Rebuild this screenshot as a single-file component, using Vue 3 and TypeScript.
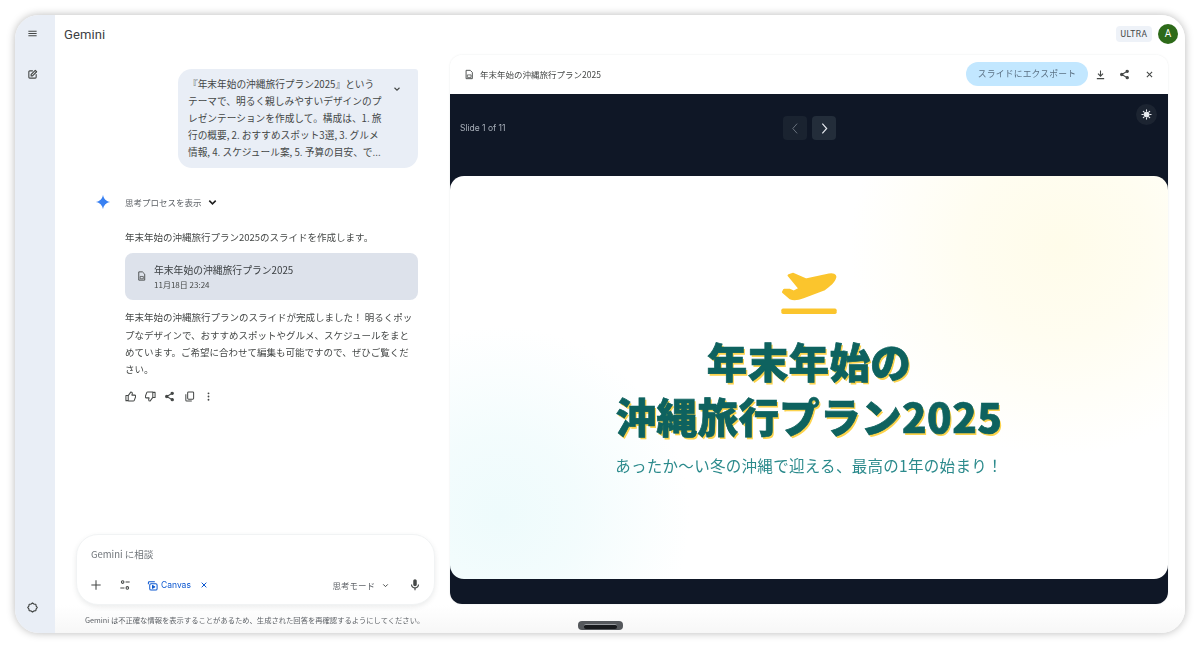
<script setup lang="ts">
const bang = '\uFF01'
const promptLines: string[] = [
  '『年末年始の沖縄旅行プラン2025』という',
  'テーマで、明るく親しみやすいデザインのプ',
  'レゼンテーションを作成して。構成は、1. 旅',
  '行の概要, 2. おすすめスポット3選, 3. グルメ',
  '情報, 4. スケジュール案, 5. 予算の目安、で...',
]
const replyLines: string[] = [
  `年末年始の沖縄旅行プランのスライドが完成しました${bang} 明るくポッ`,
  'プなデザインで、おすすめスポットやグルメ、スケジュールをまと',
  'めています。ご希望に合わせて編集も可能ですので、ぜひご覧くだ',
  'さい。',
]
const subtitle = `あったか〜い冬の沖縄で迎える、最高の1年の始まり${bang}`
</script>

<template>
  <div class="page">
    <div class="window">
      <aside class="rail">
        <div class="rail-top">
          <svg class="ic12" viewBox="0 0 24 24"><path fill="#444746" d="M3 18h18v-2H3v2zm0-5h18v-2H3v2zm0-7v2h18V6H3z" /></svg>
          <svg class="ic12 rail-new" viewBox="0 0 24 24" fill="none" stroke="#444746" stroke-width="2.4" stroke-linecap="round" stroke-linejoin="round">
            <path d="M12 4H6a2 2 0 0 0-2 2v12a2 2 0 0 0 2 2h12a2 2 0 0 0 2-2v-6" />
            <path d="M9 15v-3l9-9 3 3-9 9z" />
          </svg>
        </div>
        <svg class="ic12" viewBox="0 0 24 24" fill="none" stroke="#444746" stroke-width="2.6" stroke-linejoin="round">
          <path d="M12 2l3.200 2.500 4 .4.800 4L22.500 12 20 15.100l-.8 4-4 .4L12 22l-3.200-2.500-4-.4-.8-4L1.500 12 4 8.900l.8-4 4-.4z" />
        </svg>
      </aside>

      <div class="main">
        <header class="topbar">
          <span class="brand">Gemini</span>
          <div class="account">
            <span class="chip">ULTRA</span>
            <span class="avatar">A</span>
          </div>
        </header>

        <div class="content">
          <section class="chat">
            <div class="bubble">
              <p class="bubble-text">
                <span v-for="line in promptLines" :key="line" class="line">{{ line }}</span>
              </p>
              <svg class="bubble-chev" viewBox="0 0 24 24" fill="none" stroke="#444746" stroke-width="2.6"><path d="M6 9l6 6 6-6" /></svg>
            </div>

            <div class="answer">
              <div class="thinking">
                <svg class="spark" viewBox="0 0 24 24">
                  <defs>
                    <linearGradient id="sparkFill" x1="0" y1="1" x2="1" y2="0">
                      <stop offset="0" stop-color="#4285f4" />
                      <stop offset="1" stop-color="#2f7bf0" />
                    </linearGradient>
                  </defs>
                  <path fill="url(#sparkFill)" d="M12 1C12.800 7 17 11.200 23 12 17 12.800 12.800 17 12 23 11.200 17 7 12.800 1 12 7 11.200 11.200 7 12 1Z" />
                </svg>
                <span class="thinking-label">思考プロセスを表示</span>
                <svg class="thinking-chev" viewBox="0 0 24 24" fill="none" stroke="#1f1f1f" stroke-width="3.4"><path d="M5 8l7 7 7-7" /></svg>
              </div>

              <div class="answer-body">
                <p class="intro">年末年始の沖縄旅行プラン2025のスライドを作成します。</p>
                <div class="doc-card">
                  <svg class="doc-icon" viewBox="0 0 24 24" fill="none" stroke="#444746" stroke-width="2" stroke-linejoin="round">
                    <path d="M6 3h8l5 5v13H6z" />
                    <path d="M9 13h7v5H9z" stroke-width="1.600" />
                  </svg>
                  <div class="doc-text">
                    <span class="doc-title">年末年始の沖縄旅行プラン2025</span>
                    <span class="doc-date">11月18日 23:24</span>
                  </div>
                </div>
                <p class="reply">
                  <span v-for="line in replyLines" :key="line" class="line">{{ line }}</span>
                </p>
                <div class="actions">
                  <svg class="ic12" viewBox="0 0 24 24" fill="none" stroke="#444746" stroke-width="2.200" stroke-linejoin="round"><path d="M7 10v11H2V10zM7 10l6-8c2 0 3 1 3 3l-1 4h6c1.300 0 2 1 2 2v2l-3 8c-.3.700-1 1-2 1H7" /></svg>
                  <svg class="ic12" viewBox="0 0 24 24" fill="none" stroke="#444746" stroke-width="2.200" stroke-linejoin="round"><path d="M17 14V3h5v11zM17 14l-6 8c-2 0-3-1-3-3l1-4H3c-1.300 0-2-1-2-2v-2l3-8c.3-.7 1-1 2-1h11" /></svg>
                  <svg class="ic12" viewBox="0 0 24 24" fill="none" stroke="#444746" stroke-width="2.200"><circle cx="18" cy="5" r="2.500" fill="#444746" /><circle cx="6" cy="12" r="2.500" fill="#444746" /><circle cx="18" cy="19" r="2.500" fill="#444746" /><path d="M18 5L6 12l12 7" /></svg>
                  <svg class="ic12" viewBox="0 0 24 24" fill="none" stroke="#444746" stroke-width="2.200"><rect x="8" y="2" width="13" height="16" rx="2" /><path d="M4 7v13a2 2 0 0 0 2 2h11" /></svg>
                  <svg class="ic12" viewBox="0 0 24 24" fill="#444746"><circle cx="12" cy="5" r="2" /><circle cx="12" cy="12" r="2" /><circle cx="12" cy="19" r="2" /></svg>
                </div>
              </div>
            </div>

            <div class="composer">
              <div class="composer-input">Gemini に相談</div>
              <div class="composer-tools">
                <svg class="ic14" viewBox="0 0 24 24" fill="none" stroke="#444746" stroke-width="1.800"><path d="M12 4v16M4 12h16" /></svg>
                <svg class="ic14 tune" viewBox="0 0 24 24" fill="none" stroke="#444746" stroke-width="1.800"><circle cx="8" cy="7" r="2.200" /><path d="M13 7h7M4 17h7" /><circle cx="16" cy="17" r="2.200" /></svg>
                <span class="canvas">
                  <svg class="ic12" viewBox="0 0 24 24" fill="none" stroke="#0b57d0" stroke-width="2.200" stroke-linejoin="round"><path d="M3 9V6a2 2 0 0 1 2-2h12" /><rect x="6" y="8" width="16" height="14" rx="3" /><path d="M12 12l5 3-5 3z" fill="#0b57d0" /></svg>
                  <span class="canvas-label">Canvas</span>
                  <svg class="canvas-x" viewBox="0 0 24 24" fill="none" stroke="#0b57d0" stroke-width="3"><path d="M5 5l14 14M19 5L5 19" /></svg>
                </span>
                <span class="mode">思考モード</span>
                <svg class="mode-chev" viewBox="0 0 24 24" fill="none" stroke="#444746" stroke-width="2.600"><path d="M6 9l6 6 6-6" /></svg>
                <svg class="ic14 mic" viewBox="0 0 24 24"><path fill="#444746" d="M12 14c1.660 0 3-1.340 3-3V5c0-1.660-1.340-3-3-3S9 3.340 9 5v6c0 1.660 1.340 3 3 3zm5-3c0 2.760-2.240 5-5 5s-5-2.240-5-5H5c0 3.530 2.610 6.430 6 6.920V21h2v-3.080c3.390-.49 6-3.390 6-6.920h-2z" /></svg>
              </div>
            </div>
            <p class="disclaimer">Gemini は不正確な情報を表示することがあるため、生成された回答を再確認するようにしてください。</p>
          </section>

          <section class="panel">
            <div class="panel-head">
              <svg class="panel-doc" viewBox="0 0 24 24" fill="none" stroke="#444746" stroke-width="2.200" stroke-linejoin="round">
                <path d="M5 2h10l5 5v15H5z" />
                <path d="M8 13h9v6H8z" stroke-width="1.800" />
              </svg>
              <span class="panel-title">年末年始の沖縄旅行プラン2025</span>
              <button class="export" type="button">スライドにエクスポート</button>
              <svg class="ic12 head-dl" viewBox="0 0 24 24" fill="none" stroke="#444746" stroke-width="2.400"><path d="M12 3v12M6.500 10l5.500 5.500 5.500-5.500M4 21h16" /></svg>
              <svg class="ic12 head-share" viewBox="0 0 24 24" fill="none" stroke="#444746" stroke-width="2.200"><circle cx="18" cy="5" r="2.500" fill="#444746" /><circle cx="6" cy="12" r="2.500" fill="#444746" /><circle cx="18" cy="19" r="2.500" fill="#444746" /><path d="M18 5L6 12l12 7" /></svg>
              <svg class="ic12 head-close" viewBox="0 0 24 24" fill="none" stroke="#444746" stroke-width="2.800"><path d="M5 5l14 14M19 5L5 19" /></svg>
            </div>

            <div class="stage">
              <div class="stage-bar">
                <span class="counter">Slide 1 of 11</span>
                <div class="pager">
                  <span class="page-btn page-btn-off">
                    <svg viewBox="0 0 24 24" fill="none" stroke="#6b7480" stroke-width="1.800"><path d="M15 3l-8 9 8 9" /></svg>
                  </span>
                  <span class="page-btn">
                    <svg viewBox="0 0 24 24" fill="none" stroke="#e4e8ee" stroke-width="2.200"><path d="M8 3l8 9-8 9" /></svg>
                  </span>
                </div>
                <span class="theme-btn">
                  <svg viewBox="0 0 24 24" fill="#e8ebf0" stroke="#e8ebf0" stroke-width="2.400" stroke-linecap="round"><circle cx="12" cy="12" r="5" /><path d="M12 2v3M12 19v3M2 12h3M19 12h3M5 5l2 2M17 17l2 2M5 19l2-2M17 7l2-2" /></svg>
                </span>
              </div>

              <div class="slide">
                <svg class="plane" viewBox="540 35 175 135">
                  <path fill="#fbc52d" stroke="#fbc52d" stroke-width="8" stroke-linejoin="round" d="M567 48L580 44 618 61 688 46C700 44 707 47 706 53 702 68 690 78 672 90L610 113C594 119 580 120 571 116L550 98 553 92 568 92 582 98 600 88Z" />
                  <rect x="544" y="148" width="167" height="16" rx="5" fill="#fbc52d" />
                </svg>
                <h1 class="slide-title">年末年始の<br />沖縄旅行プラン2025</h1>
                <p class="slide-sub">{{ subtitle }}</p>
              </div>
            </div>
          </section>
        </div>
      </div>

      <div class="handle"><span class="handle-inner"></span></div>
    </div>
  </div>
</template>

<style>
html, body { margin: 0; background: #fff; }
</style>

<style scoped>
* { box-sizing: border-box; }
.page {
  width: 1200px;
  height: 648px;
  padding: 15px;
  background: #fff;
  overflow: hidden;
  font-family: "Noto Sans CJK JP", "Noto Sans", sans-serif;
  color: #3c4043;
}
.window {
  position: relative;
  width: 1170px;
  height: 618px;
  display: flex;
  border-radius: 24px;
  overflow: hidden;
  background: #fff;
  box-shadow: 0 0 9px rgba(0, 0, 0, .28);
  filter: blur(.35px);
}
.ic14 { width: 14px; height: 14px; flex: none; display: block; }
.ic12 { width: 11px; height: 11px; flex: none; display: block; }
.line { display: block; white-space: nowrap; }
p, h1 { margin: 0; }

.rail {
  width: 40px;
  flex: none;
  background: #e9eef6;
  display: flex;
  flex-direction: column;
  align-items: center;
  justify-content: space-between;
  padding: 13px 6px 20px 0;
}
.rail-top { display: flex; flex-direction: column; gap: 30px; }

.main {
  flex: 1;
  min-width: 0;
  display: flex;
  flex-direction: column;
  background: linear-gradient(#fff 590px, #f7f7f7);
}
.topbar {
  height: 40px;
  flex: none;
  display: flex;
  align-items: center;
  justify-content: space-between;
  padding: 0 7px 2px 9px;
}
.brand { font: 400 13px/1 Roboto, sans-serif; color: #3c4043; letter-spacing: .1px; }
.account { display: flex; align-items: center; gap: 6px; }
.chip {
  width: 36px;
  height: 16px;
  border-radius: 4px;
  background: #eef2f8;
  display: flex;
  align-items: center;
  justify-content: center;
  font: 400 8.500px/1 Roboto, sans-serif;
  letter-spacing: .4px;
  color: #444746;
}
.avatar {
  width: 20px;
  height: 20px;
  border-radius: 50%;
  background: #2d6a19;
  color: #fff;
  display: flex;
  align-items: center;
  justify-content: center;
  font: 400 10px/1 Roboto, sans-serif;
}
.content { flex: 1; min-height: 0; display: flex; padding-right: 17px; padding-bottom: 29px; }

.chat {
  width: 395px;
  flex: none;
  display: flex;
  flex-direction: column;
  padding-top: 14px;
  margin-bottom: -29px;
}
.bubble {
  margin-left: 123px;
  width: 240px;
  height: 99px;
  flex: none;
  padding: 7px 10px 0;
  background: #e9eef6;
  border-radius: 14px 3px 14px 14px;
  display: flex;
  justify-content: space-between;
  align-items: flex-start;
}
.bubble-text { font-size: 9.700px; line-height: 17px; color: #444746; }
.bubble-chev { width: 10px; height: 10px; margin: 8px 6px 0 0; flex: none; }

.answer { margin-top: 26px; margin-left: 40px; }
.thinking { display: flex; align-items: center; height: 16px; }
.spark { width: 16px; height: 16px; flex: none; }
.thinking-label { margin-left: 14px; font-size: 8.500px; color: #5f6368; white-space: nowrap; }
.thinking-chev { width: 11px; height: 11px; margin-left: 5px; }
.answer-body { margin-left: 30px; width: 293px; padding-top: 19px; }
.intro, .reply { font-size: 9.500px; line-height: 17.300px; color: #444746; white-space: nowrap; }
.doc-card {
  margin-top: 7px;
  height: 47px;
  border-radius: 8px;
  background: #dde2eb;
  display: flex;
  align-items: center;
  padding: 0 0 1px 11px;
}
.doc-icon { width: 11px; height: 12px; flex: none; }
.doc-text { margin-left: 7px; display: flex; flex-direction: column; gap: 2px; }
.doc-title { font-size: 9.800px; line-height: 14px; color: #3c4043; white-space: nowrap; }
.doc-date { font-size: 8px; line-height: 11px; color: #444746; white-space: nowrap; }
.reply { margin-top: 9px; }
.actions { margin-top: 13px; display: flex; gap: 8.500px; align-items: center; }

.composer {
  margin: auto 0 0 21px;
  width: 359px;
  height: 71px;
  flex: none;
  border-radius: 22px;
  background: #fff;
  border: 1px solid #f1f3f4;
  box-shadow: 0 2px 5px rgba(60, 64, 67, .1);
  padding: 12px 13px 0 12px;
}
.composer-input { font-size: 9.500px; line-height: 14px; color: #70757a; padding-left: 2px; }
.composer-tools { margin-top: 17px; display: flex; align-items: center; }
.tune { margin-left: 15px; }
.canvas { margin-left: 15px; display: flex; align-items: center; gap: 3px; }
.canvas-label { font: 400 8.500px/1 Inter, sans-serif; color: #0b57d0; }
.canvas-x { width: 8px; height: 8px; margin-left: 6px; }
.mode { margin-left: auto; font-size: 8.500px; color: #5f6368; white-space: nowrap; }
.mode-chev { width: 9px; height: 9px; margin-left: 6px; }
.mic { margin-left: 18px; margin-right: -1px; }
.disclaimer {
  margin: 9px 0 7px 30px;
  font-size: 7.300px;
  line-height: 12px;
  color: #5f6368;
  white-space: nowrap;
}

.panel {
  width: 718px;
  flex: none;
  display: flex;
  flex-direction: column;
  border-radius: 12px;
  overflow: hidden;
  box-shadow: 0 0 2px rgba(60, 64, 67, .12);
}
.panel-head {
  height: 39px;
  flex: none;
  background: #fff;
  display: flex;
  align-items: center;
  padding: 0 14px 1px 14px;
}
.panel-doc { width: 10px; height: 11px; flex: none; }
.panel-title { margin-left: 6px; font-size: 8.500px; color: #444746; white-space: nowrap; }
.export {
  margin-left: auto;
  margin-right: 1px;
  width: 122px;
  height: 24px;
  border: 0;
  border-radius: 12px;
  background: #c2e7ff;
  font: 400 8.800px/1 "Noto Sans CJK JP", sans-serif;
  letter-spacing: .2px;
  color: #5c7285;
}
.head-dl { margin-left: 6px; }
.head-share { margin-left: 13px; }
.head-close { margin-left: 15px; width: 9px; height: 9px; }

.stage {
  flex: 1;
  min-height: 0;
  background: #0f1726;
  display: flex;
  flex-direction: column;
  padding-bottom: 25px;
}
.stage-bar {
  position: relative;
  height: 82px;
  flex: none;
  padding: 0 10px;
}
.counter {
  position: absolute;
  left: 10px;
  top: 30px;
  font: 400 8.500px/1 Inter, sans-serif;
  color: #a9b0ba;
}
.pager {
  position: absolute;
  left: 333px;
  top: 22px;
  display: flex;
  gap: 5px;
}
.page-btn {
  width: 24px;
  height: 24px;
  border-radius: 4px;
  background: #232d3a;
  display: flex;
  align-items: center;
  justify-content: center;
}
.page-btn svg { width: 13px; height: 13px; }
.page-btn-off { background: #1a2330; }
.theme-btn {
  position: absolute;
  left: 686px;
  top: 10px;
  width: 21px;
  height: 21px;
  border-radius: 50%;
  background: #1c2431;
  display: flex;
  align-items: center;
  justify-content: center;
}
.theme-btn svg { width: 11px; height: 11px; }

.slide {
  flex: 1;
  min-height: 0;
  border-radius: 14px;
  background:
    radial-gradient(circle at 610px 70px, #fffcea 0, rgba(255, 252, 234, .7) 90px, rgba(255, 255, 255, 0) 210px),
    radial-gradient(circle at 50px 340px, #eefbfc 0, rgba(238, 251, 252, .7) 80px, rgba(255, 255, 255, 0) 190px),
    #fff;
  display: flex;
  flex-direction: column;
  align-items: center;
  padding-top: 95px;
}
.plane { width: 58px; height: 45px; display: block; flex: none; }
.slide-title {
  margin-top: 17px;
  font-family: "Noto Sans CJK JP", sans-serif;
  font-weight: 900;
  font-size: 40.500px;
  line-height: 55px;
  letter-spacing: .4px;
  text-align: center;
  color: #0e625f;
  -webkit-text-stroke: .7px #0e625f;
  text-shadow: 1.500px 1.500px 0 #fcd34d;
  white-space: nowrap;
}
.slide-sub {
  margin-top: 11px;
  font-size: 15.500px;
  line-height: 22px;
  letter-spacing: .3px;
  color: #2b8a8c;
  white-space: nowrap;
}

.handle {
  position: absolute;
  left: 563px;
  bottom: 3px;
  width: 45px;
  height: 9px;
  border-radius: 4px;
  background: #55585c;
  display: flex;
  align-items: flex-end;
  justify-content: center;
  padding-bottom: 1px;
}
.handle-inner {
  width: 33px;
  height: 5px;
  border-radius: 2px;
  background: #17191c;
  border-top: 1px solid #9a9da1;
}
</style>
